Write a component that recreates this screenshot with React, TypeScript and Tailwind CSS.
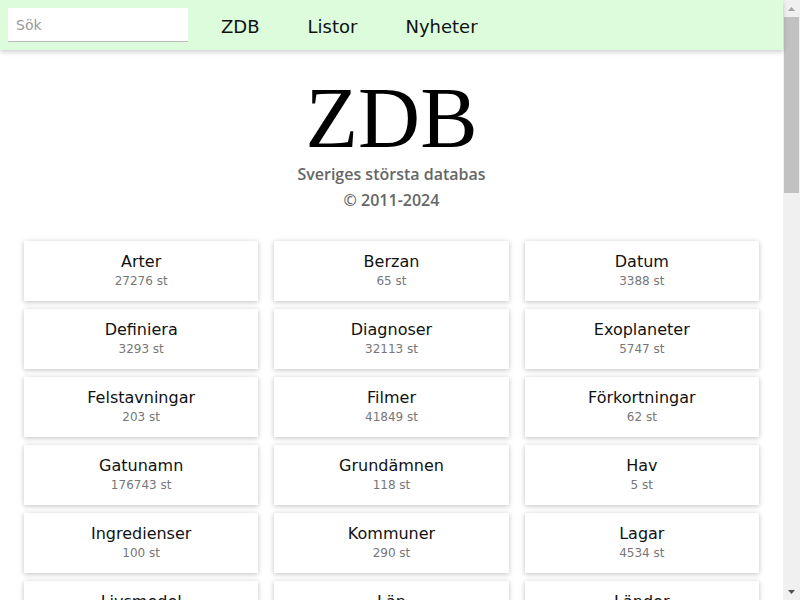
import React from "react";

const items: [string, string][] = [
  ["Arter", "27276"],
  ["Berzan", "65"],
  ["Datum", "3388"],
  ["Definiera", "3293"],
  ["Diagnoser", "32113"],
  ["Exoplaneter", "5747"],
  ["Felstavningar", "203"],
  ["Filmer", "41849"],
  ["Förkortningar", "62"],
  ["Gatunamn", "176743"],
  ["Grundämnen", "118"],
  ["Hav", "5"],
  ["Ingredienser", "100"],
  ["Kommuner", "290"],
  ["Lagar", "4534"],
  ["Livsmedel", "2569"],
  ["Län", "21"],
  ["Länder", "197"],
];

function ScrollBar() {
  return (
    <div className="w-[17px] h-[600px] bg-[#f0f0f0] flex flex-col items-center shrink-0">
      <div className="h-[17px] w-full flex items-center justify-center">
        <svg width="7" height="4" viewBox="0 0 7 4"><path d="M0 4 L3.5 0 L7 4 Z" fill="#a3a3a3" /></svg>
      </div>
      <div className="w-[15px] h-[176px] bg-[#c1c1c1]" />
      <div className="flex-1" />
      <div className="h-[17px] w-full flex items-center justify-center">
        <svg width="7" height="4" viewBox="0 0 7 4"><path d="M0 0 L7 0 L3.5 4 Z" fill="#505050" /></svg>
      </div>
    </div>
  );
}

export default function App() {
  return (
    <div className="h-[600px] overflow-hidden flex bg-white" style={{ fontFamily: "'DejaVu Sans', Verdana, sans-serif" }}>
      <div className="w-[783px] shrink-0">
        <header className="h-[50px] bg-[#dcfcdc] flex items-center shadow-[0_2px_5px_rgba(0,0,0,0.2)] relative z-10">
          <input
            placeholder="Sök"
            className="ml-2 w-[180px] h-[34px] bg-white border-b border-[#bbb] px-2 text-[14px] text-[#333] placeholder:text-[#999] outline-none"
            style={{ fontFamily: "'DejaVu Sans', Verdana, sans-serif" }}
          />
          <nav className="flex items-center ml-[33px] gap-[48px] text-[18px] text-[#111] pt-[2px]">
            <span>ZDB</span>
            <span>Listor</span>
            <span>Nyheter</span>
          </nav>
        </header>
        <div className="flex flex-col items-center pt-[25px]">
          <h1 className="text-[86px] leading-[86px] text-black" style={{ fontFamily: "'Liberation Serif', 'Times New Roman', serif" }}>
            ZDB
          </h1>
          <p className="text-[16px] font-semibold text-[#666] leading-[26px]" style={{ fontFamily: "'Open Sans', sans-serif" }}>
            Sveriges största databas
          </p>
          <p className="text-[16px] font-semibold text-[#666] leading-[26px]" style={{ fontFamily: "'Open Sans', sans-serif" }}>
            © 2011-2024
          </p>
        </div>
        <div className="grid grid-cols-3 gap-x-4 gap-y-[8px] px-6 pt-[28px] pb-8">
          {items.map(([name, count]) => (
            <div key={name} className="h-[60px] bg-white shadow-[0_1px_5px_rgba(0,0,0,0.25)] flex flex-col items-center justify-center pb-[2px]">
              <div className="text-[16px] text-[#111] leading-[20px]">{name}</div>
              <div className="text-[12px] text-[#777] leading-[16px] mt-[1px]">{count} st</div>
            </div>
          ))}
        </div>
      </div>
      <ScrollBar />
    </div>
  );
}
